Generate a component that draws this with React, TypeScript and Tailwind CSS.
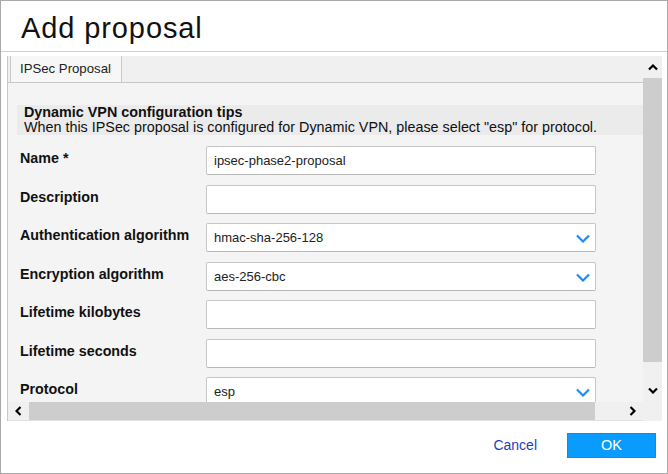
import React from 'react'

const rows: { label: string; value: string; select?: boolean }[] = [
  { label: 'Name *', value: 'ipsec-phase2-proposal' },
  { label: 'Description', value: '' },
  { label: 'Authentication algorithm', value: 'hmac-sha-256-128', select: true },
  { label: 'Encryption algorithm', value: 'aes-256-cbc', select: true },
  { label: 'Lifetime kilobytes', value: '' },
  { label: 'Lifetime seconds', value: '' },
  { label: 'Protocol', value: 'esp', select: true },
]

function DropChevron() {
  return (
    <svg width="14" height="9" viewBox="0 0 14 9" className="absolute right-[5px] top-[10px]">
      <path d="M1 1.5 L7 7.5 L13 1.5" fill="none" stroke="#1a8cff" strokeWidth="2.2" />
    </svg>
  )
}

function Arrow({ dir }: { dir: 'up' | 'down' | 'left' | 'right' }) {
  const d = {
    up: 'M1 5.5 L5 1.5 L9 5.5',
    down: 'M1 1.5 L5 5.5 L9 1.5',
    left: 'M5.5 1 L1.5 5 L5.5 9',
    right: 'M1.5 1 L5.5 5 L1.5 9',
  }[dir]
  const w = dir === 'up' || dir === 'down' ? 10 : 7
  const h = dir === 'up' || dir === 'down' ? 7 : 10
  return (
    <svg width={w} height={h} viewBox={`0 0 ${w} ${h}`}>
      <path d={d} fill="none" stroke="#000" strokeWidth="2.2" />
    </svg>
  )
}

export default function App() {
  return (
    <div className="flex h-[474px] w-[668px] flex-col border border-[#a9a9a9] bg-white font-['Liberation_Sans',Arial,sans-serif] text-black">
      <div className="h-[51px] shrink-0 border-b border-[#cfcfcf] pl-[20px] pt-[9px]">
        <h1 className="text-[29px] leading-[36px] tracking-[0.9px] text-[#111]">Add proposal</h1>
      </div>

      <div className="ml-[6px] mr-[5px] mt-[4px] flex h-[365px] shrink-0">
        <div className="flex min-w-0 flex-1 flex-col border-l border-[#c8c8c8]">
          <div className="flex-1 overflow-hidden bg-[#f4f4f4]">
            <div className="flex h-[27px] border-b border-[#c8c8c8] bg-[#f0f0f0]">
              <div className="ml-[2px] w-[112px] border-x border-[#c8c8c8] bg-[#f7f7f7] pl-[9px] text-[13.2px] leading-[26px] text-[#222]">
                IPSec Proposal
              </div>
            </div>

            <div className="ml-[9px] mt-[22px] bg-[#ebebeb] pl-[7px] text-[14.35px] leading-[15px] text-[#111]">
              <div className="font-bold">Dynamic VPN configuration tips</div>
              <div>When this IPSec proposal is configured for Dynamic VPN, please select "esp" for protocol.</div>
            </div>

            <div className="mt-[11px] flex flex-col gap-[9.5px] pl-[12px]">
              {rows.map((r) => (
                <div key={r.label} className="flex items-start">
                  <div className="w-[186px] shrink-0 pt-[4px] text-[14.3px] font-bold leading-[16px] text-[#111]">{r.label}</div>
                  <div className="relative flex h-[29px] w-[390px] shrink-0 items-center rounded-[2px] border border-[#c6c6c6] border-b-[#b8b8b8] bg-white pl-[7px] text-[13px] leading-[15px] text-[#222]">
                    {r.value}
                    {r.select && <DropChevron />}
                  </div>
                </div>
              ))}
            </div>
          </div>

          <div className="flex h-[19px] shrink-0 border-b border-[#e2e2e2] bg-[#f0f0f0]">
            <div className="flex w-[21px] items-center justify-center">
              <Arrow dir="left" />
            </div>
            <div className="w-[566px] bg-[#cdcdcd]" />
            <div className="flex-1" />
            <div className="flex w-[22px] items-center justify-center">
              <Arrow dir="right" />
            </div>
          </div>
        </div>

        <div className="flex w-[19px] shrink-0 flex-col bg-[#f0f0f0]">
          <div className="flex h-[22px] items-center justify-center">
            <Arrow dir="up" />
          </div>
          <div className="h-[284px] bg-[#cdcdcd]" />
          <div className="flex-1" />
          <div className="flex h-[22px] items-center justify-center">
            <Arrow dir="down" />
          </div>
          <div className="h-[20px]" />
        </div>
      </div>

      <div className="flex flex-1 items-start justify-end gap-[30px] pr-[11px] pt-[12px]">
        <button className="text-[14px] leading-[25px] text-[#1d3fbb]">Cancel</button>
        <button className="h-[25px] w-[89px] border border-[#1a86e0] bg-[#0a9bff] text-[14.5px] text-white">OK</button>
      </div>
    </div>
  )
}
